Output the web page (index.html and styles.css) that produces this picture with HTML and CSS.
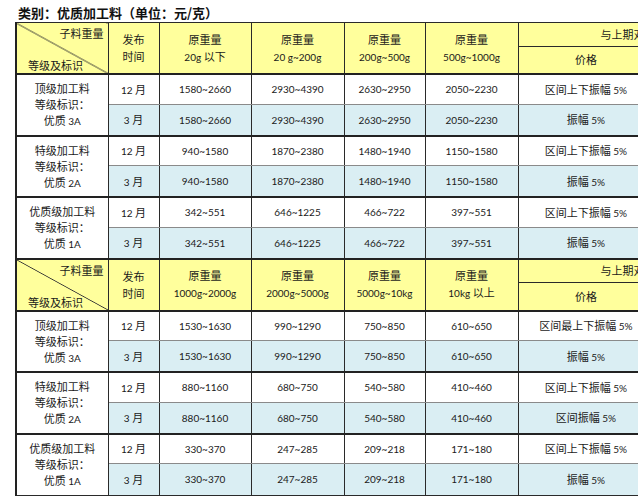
FILE: index.html
```html
<!DOCTYPE html>
<html lang="zh">
<head>
<meta charset="utf-8">
<title>优质加工料</title>
<link rel="stylesheet" href="styles.css">
</head>
<body>
<div class="page">
  <h1 class="title">类别：优质加工料（单位：元/克）</h1>
  <table class="grid">
    <colgroup>
      <col class="c1"><col class="c2"><col class="c3"><col class="c4"><col class="c5"><col class="c6"><col class="c7"><col class="c8">
    </colgroup>
    <tbody>
      <tr class="hd ha">
        <th rowspan="2" class="diag"><div class="dt">子料重量</div><div class="db">等级及标识</div></th>
        <th rowspan="2">发布<br>时间</th>
        <th rowspan="2">原重量<br><span class="n">20g</span> 以下</th>
        <th rowspan="2">原重量<br><span class="n">20 g~200g</span></th>
        <th rowspan="2">原重量<br><span class="n">200g~500g</span></th>
        <th rowspan="2">原重量<br><span class="n">500g~1000g</span></th>
        <th colspan="2" class="cmp">与上期对比</th>
      </tr>
      <tr class="hd hb"><th>价格</th><th>幅度</th></tr>

      <tr class="r12 gs">
        <td rowspan="2" class="grade">顶级加工料<br>等级标识：<br>优质 <span class="n">3A</span></td>
        <td><span class="n">12</span> 月</td><td class="n">1580~2660</td><td class="n">2930~4390</td><td class="n">2630~2950</td><td class="n">2050~2230</td><td>区间上下振幅 <span class="n">5%</span></td><td></td>
      </tr>
      <tr class="r3">
        <td><span class="n">3</span> 月</td><td class="n">1580~2660</td><td class="n">2930~4390</td><td class="n">2630~2950</td><td class="n">2050~2230</td><td>振幅 <span class="n">5%</span></td><td></td>
      </tr>
      <tr class="r12 gs">
        <td rowspan="2" class="grade">特级加工料<br>等级标识：<br>优质 <span class="n">2A</span></td>
        <td><span class="n">12</span> 月</td><td class="n">940~1580</td><td class="n">1870~2380</td><td class="n">1480~1940</td><td class="n">1150~1580</td><td>区间上下振幅 <span class="n">5%</span></td><td></td>
      </tr>
      <tr class="r3">
        <td><span class="n">3</span> 月</td><td class="n">940~1580</td><td class="n">1870~2380</td><td class="n">1480~1940</td><td class="n">1150~1580</td><td>振幅 <span class="n">5%</span></td><td></td>
      </tr>
      <tr class="r12 gs">
        <td rowspan="2" class="grade">优质级加工料<br>等级标识：<br>优质 <span class="n">1A</span></td>
        <td><span class="n">12</span> 月</td><td class="n">342~551</td><td class="n">646~1225</td><td class="n">466~722</td><td class="n">397~551</td><td>区间上下振幅 <span class="n">5%</span></td><td></td>
      </tr>
      <tr class="r3">
        <td><span class="n">3</span> 月</td><td class="n">342~551</td><td class="n">646~1225</td><td class="n">466~722</td><td class="n">397~551</td><td>振幅 <span class="n">5%</span></td><td></td>
      </tr>

      <tr class="hd ha gs">
        <th rowspan="2" class="diag"><div class="dt">子料重量</div><div class="db">等级及标识</div></th>
        <th rowspan="2">发布<br>时间</th>
        <th rowspan="2">原重量<br><span class="n">1000g~2000g</span></th>
        <th rowspan="2">原重量<br><span class="n">2000g~5000g</span></th>
        <th rowspan="2">原重量<br><span class="n">5000g~10kg</span></th>
        <th rowspan="2">原重量<br><span class="n">10kg</span> 以上</th>
        <th colspan="2" class="cmp">与上期对比</th>
      </tr>
      <tr class="hd hb"><th>价格</th><th>幅度</th></tr>

      <tr class="r12 gs">
        <td rowspan="2" class="grade">顶级加工料<br>等级标识：<br>优质 <span class="n">3A</span></td>
        <td><span class="n">12</span> 月</td><td class="n">1530~1630</td><td class="n">990~1290</td><td class="n">750~850</td><td class="n">610~650</td><td>区间最上下振幅 <span class="n">5%</span></td><td></td>
      </tr>
      <tr class="r3">
        <td><span class="n">3</span> 月</td><td class="n">1530~1630</td><td class="n">990~1290</td><td class="n">750~850</td><td class="n">610~650</td><td>振幅 <span class="n">5%</span></td><td></td>
      </tr>
      <tr class="r12 gs">
        <td rowspan="2" class="grade">特级加工料<br>等级标识：<br>优质 <span class="n">2A</span></td>
        <td><span class="n">12</span> 月</td><td class="n">880~1160</td><td class="n">680~750</td><td class="n">540~580</td><td class="n">410~460</td><td>区间上下振幅 <span class="n">5%</span></td><td></td>
      </tr>
      <tr class="r3">
        <td><span class="n">3</span> 月</td><td class="n">880~1160</td><td class="n">680~750</td><td class="n">540~580</td><td class="n">410~460</td><td>区间振幅 <span class="n">5%</span></td><td></td>
      </tr>
      <tr class="r12 gs">
        <td rowspan="2" class="grade">优质级加工料<br>等级标识：<br>优质 <span class="n">1A</span></td>
        <td><span class="n">12</span> 月</td><td class="n">330~370</td><td class="n">247~285</td><td class="n">209~218</td><td class="n">171~180</td><td>区间上下振幅 <span class="n">5%</span></td><td></td>
      </tr>
      <tr class="r3">
        <td><span class="n">3</span> 月</td><td class="n">330~370</td><td class="n">247~285</td><td class="n">209~218</td><td class="n">171~180</td><td>振幅 <span class="n">5%</span></td><td></td>
      </tr>
    </tbody>
  </table>
</div>
</body>
</html>
```

FILE: styles.css
```css
html, body {
  margin: 0;
  padding: 0;
  background: #ffffff;
}

body {
  font-family: "Noto Sans CJK SC", "Lato", sans-serif;
  color: #1a1a1a;
}

.page {
  width: 638px;
  height: 500px;
  overflow: hidden;
}

.title {
  margin: 0;
  padding: 4px 0 0 18px;
  height: 18px;
  font-family: "Noto Sans CJK SC", sans-serif;
  font-size: 13px;
  font-weight: bold;
  line-height: 18px;
  color: #111;
}

.grid {
  border-collapse: collapse;
  table-layout: fixed;
  width: 722px;
  margin-left: 15px;
  font-size: 11px;
  line-height: 16px;
  border-left: 2px solid #222;
}

.c1 { width: 92px; }
.c2 { width: 51px; }
.c3 { width: 92px; }
.c4 { width: 93px; }
.c5 { width: 81px; }
.c6 { width: 93px; }
.c7 { width: 136px; }
.c8 { width: 84px; }

.grid td,
.grid th {
  border: 1px solid #2a2a2a;
  padding: 0;
  text-align: center;
  vertical-align: middle;
  font-weight: normal;
  white-space: nowrap;
  overflow: hidden;
}

.n {
  font-family: "Lato", "Liberation Sans", sans-serif;
  font-size: 10px;
}

.hd th {
  background: #ffff9c;
  line-height: 17px;
}

.ha { height: 23px; }
.hb { height: 27px; }

.gs td,
.gs th {
  border-top: 2px solid #222;
}

.r12 { height: 30px; }
.r3 { height: 31.5px; }

.r12 td {
  background: #ffffff;
}

.r12 td:not(.grade) {
  border-bottom-color: #8a8a8a;
}

.r3 td {
  background: #daeef3;
  border-top-color: #8a8a8a;
}

.grade {
  line-height: 16px;
}

.diag {
  vertical-align: top !important;
  background: linear-gradient(to top right, #ffff9c calc(50% - 0.8px), #333 50%, #ffff9c calc(50% + 0.8px)) !important;
  line-height: 15px !important;
}

.diag .dt {
  text-align: right;
  padding: 3px 4px 0 0;
}

.diag .db {
  text-align: left;
  padding-left: 11px;
  margin-top: 17px;
}
```
